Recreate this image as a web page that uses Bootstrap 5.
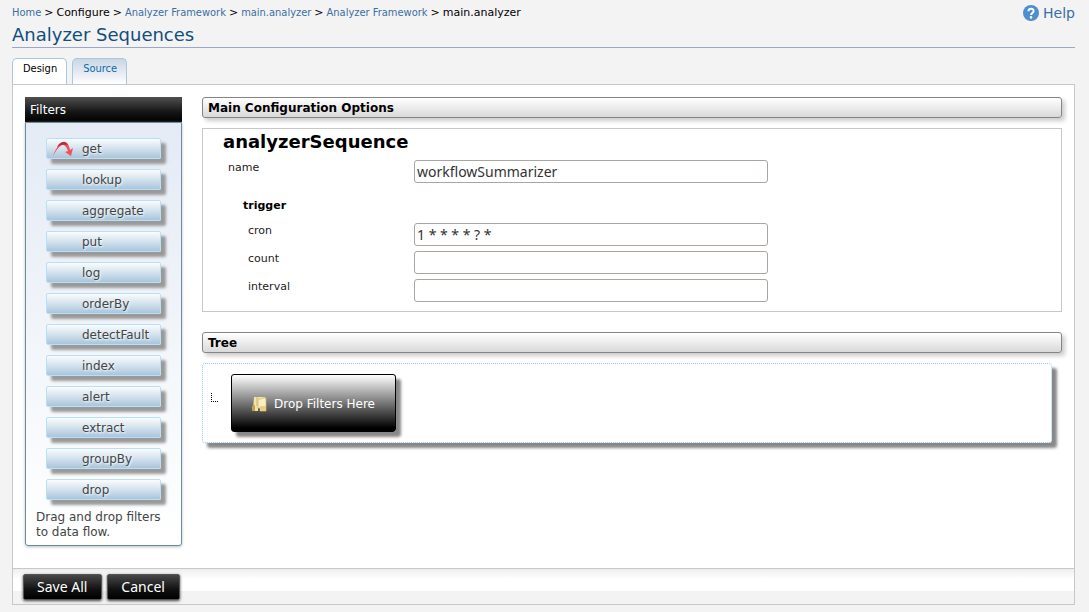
<!DOCTYPE html>
<html lang="en">
<head>
<meta charset="utf-8">
<meta name="viewport" content="width=device-width, initial-scale=1">
<title>Analyzer Sequences</title>
<link href="https://cdn.jsdelivr.net/npm/bootstrap@5.3.0/dist/css/bootstrap.min.css" rel="stylesheet">
<style>
body { background: #f3f3f3; color: #000; font: 11px/16px "DejaVu Sans", sans-serif; padding: 4px 14px 7px 12px; }
a { color: #3a6ea5; text-decoration: none; }
.crumbs { gap: 3px; line-height: 17px; }
.crumbs a { font-family: "DejaVu Sans Condensed", "DejaVu Sans", sans-serif; }
.help-link { font-size: 14px; gap: 4px; }
.page-title { font-size: 18px; line-height: 24px; color: #114e7e; border-bottom: 1px solid #99a8c8; margin: 2px 0 10px; }
.tabs { gap: 5px; }
.tabs .nav-link { font: 11px/14px "DejaVu Sans Condensed", "DejaVu Sans", sans-serif; padding: 3px 9px 8px 10px; border: 1px solid #a9c8dc; border-bottom: 0; border-radius: 5px 5px 0 0; color: #0f6ba5; background: linear-gradient(#c9d6e5, #f3f5f9 80%, #fff); }
.tabs .nav-link.active { color: #000; background: #fff; }
.panel { background: #fff; border: 1px solid #c8c8c8; }
.panel-main { padding: 12px 12px 22px; gap: 20px; }
.palette { flex: 0 0 157px; }
.palette-title { background: linear-gradient(#505050, #151515 60%, #000); color: #fff; font-size: 12px; line-height: 24px; padding: 1px 5px 0; margin: 0; font-weight: 400; }
.palette-body { border: 1px solid #6d8ca0; border-radius: 0 0 3px 3px; background: linear-gradient(#e4ebf5, #fff); padding: 15px 10px 5px; box-shadow: 0 1px 3px #bbb; color: #444; font-size: 12px; line-height: 15px; }
.filters { gap: 10px; margin: 0 10px 10px; }
.filter-btn { position: relative; display: block; width: 115px; height: 21px; border: 1px solid #b9def5; border-radius: 2px; background: linear-gradient(#fafcfd, #d4e2ed 50%, #a9c5dc); box-shadow: 5px 5px 3px #999; padding: 1px 0 0 35px; text-align: left; color: #444; line-height: 18px; text-shadow: 1px 1px 2px #fff; }
.filter-btn svg { position: absolute; left: 5px; top: 2px; }
.bar-title { font-size: 12px; font-weight: 700; line-height: 18px; border: 1px solid #858585; border-radius: 3px; background: linear-gradient(#fff, #d9d9d9); box-shadow: 3px 3px 4px #ccc; padding: 1px 5px 0; margin: 0 0 10px; }
.options { border: 1px solid #c8c8c8; padding: 1px 20px 9px; margin-bottom: 20px; }
.options h3 { font-size: 18px; font-weight: 700; line-height: 24px; margin: 0 0 6px; }
.options h4 { font-size: 11px; font-weight: 700; line-height: 16px; margin: 15px 20px 9px; }
.field-row { margin-bottom: 5px; padding-left: 5px; }
.field-row label { flex: 0 0 186px; color: #222; }
.field-row.sub-row { padding-left: 25px; }
.sub-row label { flex-basis: 166px; }
.field-row:last-child { margin-bottom: 0; }
.field-row input { flex: 0 1 354px; min-width: 0; height: 23px; border: 1px solid #aaa5a0; border-radius: 3px; background: #fff; color: #333; font: 14px/19px "Noto Sans", sans-serif; padding: 0 2px; }
.tree { border: 1px dotted #8fcbf0; border-radius: 3px; box-shadow: 5px 5px 3px #888; padding: 10px 28px 10px 8px; margin-right: 10px; gap: 13px; background: #fff; }
.branch { width: 7px; height: 9px; margin-bottom: 11px; border: dotted #000; border-width: 0 0 1px 1px; }
.drop-btn { height: 58px; width: 165px; border: 1px solid #000; border-radius: 3px; background: linear-gradient(#fff, #777 50%, #000 95%); box-shadow: 5px 5px 3px #888; color: #fff; font-size: 12px; padding: 2px 0 0; gap: 7px; }
.actions { border-top: 1px solid #c8c8c8; background: linear-gradient(#eee, #fff 10px, #fff 22px, #f3f3f3 22px); padding: 5px 10px 4px; gap: 5px; }
.dark-btn { height: 26px; border: 1px solid #555; border-radius: 2px; background: linear-gradient(#484848, #111 60%, #000); box-shadow: 0 1px 3px #444; color: #fff; font: 14px/20px "Noto Sans", sans-serif; padding: 0 14px 0 13px; }
</style>
</head>
<body>
<header>
  <div class="d-flex justify-content-between">
    <nav class="crumbs d-flex" aria-label="Breadcrumb"><a href="#">Home</a><span>&gt;</span><span>Configure</span><span>&gt;</span><a href="#">Analyzer Framework</a><span>&gt;</span><a href="#">main.analyzer</a><span>&gt;</span><a href="#">Analyzer Framework</a><span>&gt;</span><span>main.analyzer</span></nav>
    <a href="#" class="help-link d-flex align-items-center">
      <svg width="16" height="16" viewBox="0 0 16 16" aria-hidden="true"><circle cx="8" cy="8" r="8" fill="#4d8fce"/><path d="M5.4 6.2C5.4 2.8 10.7 2.9 10.6 6c0 2-2.5 2-2.5 4" fill="none" stroke="#fff" stroke-width="2"/><circle cx="8" cy="12.4" r="1.3" fill="#fff"/></svg>
      <span>Help</span></a>
  </div>
  <h1 class="page-title fw-normal">Analyzer Sequences</h1>
</header>
<ul class="nav tabs">
  <li class="nav-item"><a class="nav-link active" href="#" aria-current="page">Design</a></li>
  <li class="nav-item"><a class="nav-link" href="#">Source</a></li>
</ul>
<main class="panel">
  <div class="panel-main d-flex align-items-start">
    <aside class="palette">
      <h2 class="palette-title">Filters</h2>
      <div class="palette-body">
        <div class="filters d-flex flex-column">
          <button type="button" class="filter-btn"><svg width="21" height="16" viewBox="0 0 21 16" aria-hidden="true"><path d="M1 15C3 9 7 2 11 1c4-1 6 3 7 8l3-2-2 8-6-4 3-1c-1-3-3-6-5-6-3 0-6 4-10 11z" fill="#f5505f"/><path d="M5 6C8 1 13-1 16 4c-3-1-7-1-11 2z" fill="#a8323f"/></svg>get</button>
          <button type="button" class="filter-btn">lookup</button>
          <button type="button" class="filter-btn">aggregate</button>
          <button type="button" class="filter-btn">put</button>
          <button type="button" class="filter-btn">log</button>
          <button type="button" class="filter-btn">orderBy</button>
          <button type="button" class="filter-btn">detectFault</button>
          <button type="button" class="filter-btn">index</button>
          <button type="button" class="filter-btn">alert</button>
          <button type="button" class="filter-btn">extract</button>
          <button type="button" class="filter-btn">groupBy</button>
          <button type="button" class="filter-btn">drop</button>
        </div>
        <p class="mb-0">Drag and drop filters to data flow.</p>
      </div>
    </aside>
    <div class="flex-grow-1">
      <h2 class="bar-title">Main Configuration Options</h2>
      <form class="options">
        <h3>analyzerSequence</h3>
        <div class="field-row d-flex"><label for="name">name</label><input id="name" type="text" value="workflowSummarizer"></div>
        <h4>trigger</h4>
        <div class="field-row sub-row d-flex"><label for="cron">cron</label><input id="cron" type="text" value="1 * * * * ? *"></div>
        <div class="field-row sub-row d-flex"><label for="count">count</label><input id="count" type="text"></div>
        <div class="field-row sub-row d-flex"><label for="interval">interval</label><input id="interval" type="text"></div>
      </form>
      <h2 class="bar-title">Tree</h2>
      <div class="tree d-flex align-items-center">
        <span class="branch"></span>
        <button type="button" class="drop-btn d-flex align-items-center justify-content-center">
          <svg width="15" height="16" viewBox="0 0 15 16" aria-hidden="true"><path d="M2 1h11v5H6v9H1z" fill="#f3e3a9"/><path d="M5 1v9" stroke="#d0b86c"/><path d="M0 10l3-1v6H0z" fill="#c2a04a"/><path d="M6 3h3l1-1h4v13H8v-3H6z" fill="#f8eec6" stroke="#cfb468" stroke-width=".7"/><path d="M8 10h6v5H8z" fill="#e5cf86"/></svg>
          <span>Drop Filters Here</span></button>
      </div>
    </div>
  </div>
  <div class="actions d-flex">
    <button type="button" class="dark-btn">Save All</button>
    <button type="button" class="dark-btn">Cancel</button>
  </div>
</main>
<script src="https://cdn.jsdelivr.net/npm/bootstrap@5.3.0/dist/js/bootstrap.bundle.min.js"></script>
</body>
</html>
